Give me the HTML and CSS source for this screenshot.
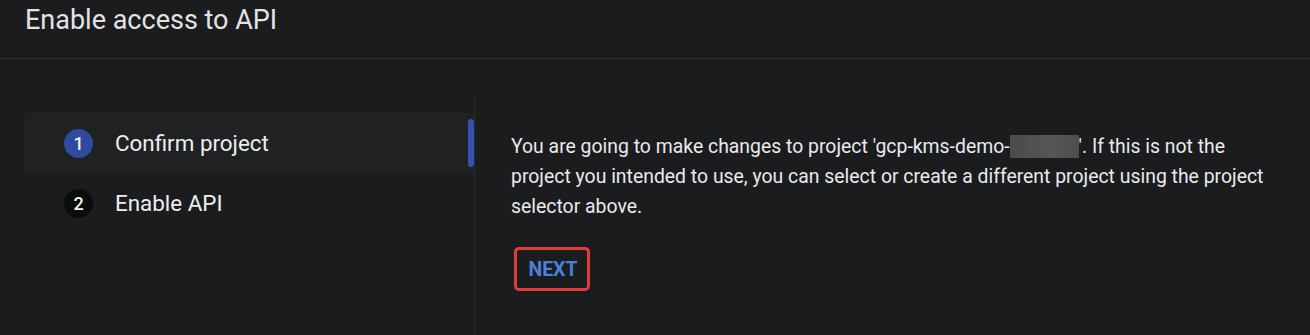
FILE: index.html
```html
<!DOCTYPE html>
<html lang="en">
<head>
<meta charset="utf-8">
<title>Enable access to API</title>
<link rel="stylesheet" href="styles.css">
</head>
<body>
<header class="page-header">
  <h1 class="page-title">Enable access to API</h1>
</header>
<main class="wizard">
  <nav class="steps">
    <div class="step step-active">
      <span class="step-num">1</span>
      <span class="step-label">Confirm project</span>
      <span class="step-indicator"></span>
    </div>
    <div class="step">
      <span class="step-num">2</span>
      <span class="step-label">Enable API</span>
    </div>
  </nav>
  <section class="step-content">
    <p class="step-text">You are going to make changes to project 'gcp-kms-demo-<span class="redacted"></span>'. If this is not the project you intended to use, you can select or create a different project using the project selector above.</p>
    <button class="btn-next" type="button">NEXT</button>
  </section>
</main>
</body>
</html>
```

FILE: styles.css
```css
* { box-sizing: border-box; }

html, body {
  margin: 0;
  padding: 0;
  background: #1b1c1e;
  height: 100%;
}

body {
  font-family: Roboto, "Liberation Sans", sans-serif;
  color: #e8eaed;
  overflow: hidden;
}

.page-header {
  height: 59px;
  border-bottom: 1px solid #2c2d30;
  padding-left: 25px;
}

.page-title {
  margin: 0;
  font-weight: 400;
  font-size: 27px;
  line-height: 34px;
  padding-top: 3px;
  color: #e3e3e3;
}

.wizard {
  display: flex;
  height: calc(100% - 59px);
}

.steps {
  width: 450px;
  margin-left: 25px;
  margin-top: 36px;
  padding-top: 18px;
  border-right: 1px solid #2a2b2e;
}

.step {
  position: relative;
  height: 60px;
  display: flex;
  align-items: center;
  padding-left: 39px;
}

.step-active {
  background: #1f2123;
}

.step-num {
  width: 29px;
  height: 29px;
  border-radius: 50%;
  background: #0b0c0c;
  color: #f1f1f1;
  display: flex;
  align-items: center;
  justify-content: center;
  font-size: 18px;
  font-weight: 500;
  flex: none;
}

.step-active .step-num {
  background: #2f4a9f;
}

.step-label {
  margin-left: 22px;
  font-size: 22.4px;
  color: #eceeef;
}

.step-indicator {
  position: absolute;
  right: 0;
  top: 6px;
  width: 6px;
  height: 48px;
  border-radius: 3px;
  background: #3450b0;
}

.step-content {
  flex: 1;
  padding: 73px 30px 0 36px;
}

.step-text {
  margin: 0;
  font-size: 19.4px;
  line-height: 30px;
  color: #e8eaed;
  max-width: 770px;
}

.redacted {
  display: inline-block;
  width: 69px;
  height: 23px;
  vertical-align: -5px;
  background: linear-gradient(90deg, #4b4b4d, #565657 60%, #4e4e50);
}

.btn-next {
  margin-top: 25px;
  margin-left: 3px;
  width: 76px;
  height: 44px;
  border: 3px solid #e53a3a;
  border-radius: 5px;
  background: transparent;
  color: #4a7fdc;
  font-family: Roboto, "Liberation Sans", sans-serif;
  font-weight: 700;
  font-size: 19.5px;
  padding: 0 0 0 2px;
  display: block;
}
```
